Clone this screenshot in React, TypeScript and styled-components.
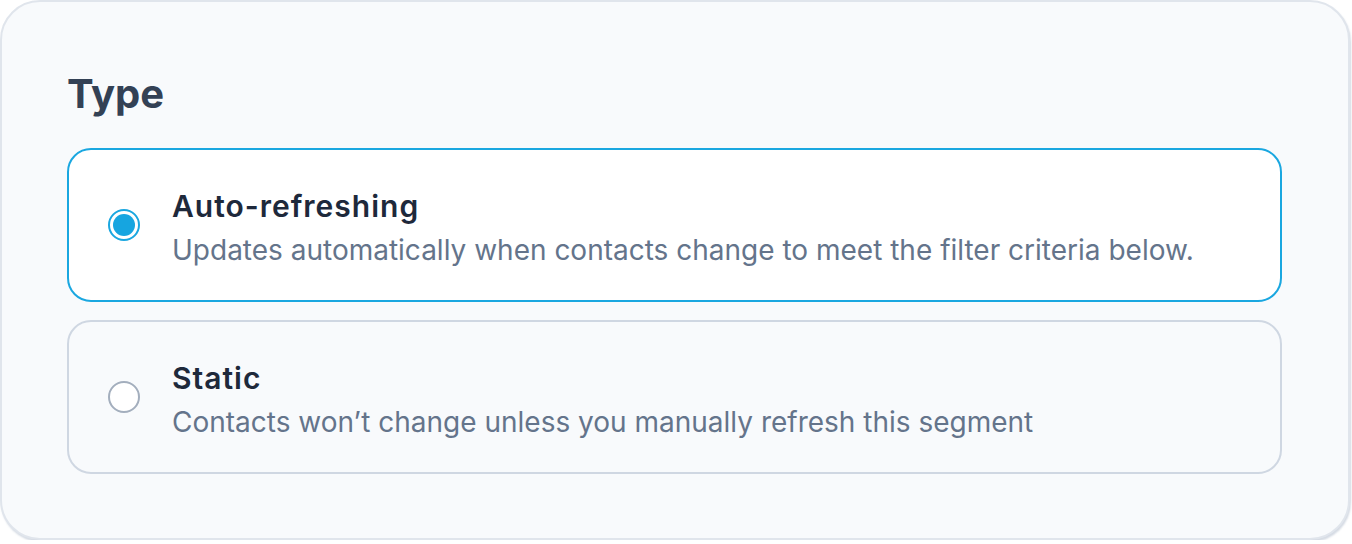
import React, { useState } from "react";
import styled, { createGlobalStyle } from "styled-components";

const Global = createGlobalStyle`
  html, body { margin: 0; padding: 0; background: #ffffff; }
  body { font-family: Inter, "Noto Sans", sans-serif; -webkit-font-smoothing: antialiased; }
  * { box-sizing: border-box; }
`;

const Panel = styled.section`
  width: 1350px;
  height: 540px;
  background: #f8fafc;
  border: 2px solid #e0e5ec;
  border-radius: 40px;
  box-shadow: 1px 2px 2px rgba(148, 163, 184, 0.4);
  padding: 68px 66px 64px 65px;
  display: flex;
  flex-direction: column;
`;

const Title = styled.h2`
  margin: 0 0 30px 0;
  font-size: 40px;
  line-height: 48px;
  font-weight: 700;
  color: #334155;
  letter-spacing: -0.1px;
`;

const Options = styled.div`
  display: flex;
  flex-direction: column;
  gap: 18px;
`;

const Option = styled.label<{ $selected: boolean }>`
  display: flex;
  align-items: flex-start;
  gap: 32px;
  height: 154px;
  padding: 36px 39px 0 39px;
  border-radius: 24px;
  border: 2px solid ${(p) => (p.$selected ? "#1aa7e0" : "#cfd7e2")};
  background: ${(p) => (p.$selected ? "#ffffff" : "transparent")};
  cursor: pointer;
`;

const Radio = styled.span<{ $selected: boolean }>`
  flex: none;
  width: 32px;
  height: 32px;
  margin-top: 23px;
  border-radius: 50%;
  border: 2px solid ${(p) => (p.$selected ? "#1aa7e0" : "#a3aebd")};
  background: #ffffff;
  display: flex;
  align-items: center;
  justify-content: center;

  &::after {
    content: "";
    width: 22px;
    height: 22px;
    border-radius: 50%;
    background: ${(p) => (p.$selected ? "#16a5e0" : "transparent")};
  }
`;

const Texts = styled.div`
  display: flex;
  flex-direction: column;
  gap: 4px;
`;

const Label = styled.div`
  font-size: 30px;
  line-height: 40px;
  font-weight: 600;
  color: #1e293b;
  letter-spacing: 1px;
`;

const Desc = styled.div`
  font-size: 28px;
  line-height: 40px;
  font-weight: 400;
  color: #64748b;
`;

const options = [
  {
    id: "auto",
    label: "Auto-refreshing",
    desc: "Updates automatically when contacts change to meet the filter criteria below.",
  },
  {
    id: "static",
    label: "Static",
    desc: "Contacts won\u2019t change unless you manually refresh this segment",
  },
];

export default function App() {
  const [value, setValue] = useState("auto");
  return (
    <>
      <Global />
      <Panel>
        <Title>Type</Title>
        <Options>
          {options.map((o) => (
            <Option key={o.id} $selected={value === o.id} onClick={() => setValue(o.id)}>
              <Radio $selected={value === o.id} />
              <Texts>
                <Label>{o.label}</Label>
                <Desc>{o.desc}</Desc>
              </Texts>
            </Option>
          ))}
        </Options>
      </Panel>
    </>
  );
}
